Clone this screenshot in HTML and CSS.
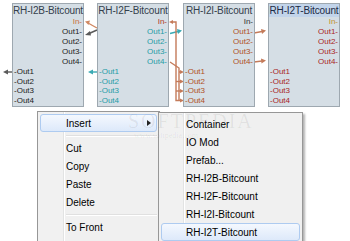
FILE: index.html
```html
<!DOCTYPE html>
<html lang="en">
<head>
    <meta charset="UTF-8">
    <title>Bitcount modules</title>
    <link rel="stylesheet" href="styles.css">
</head>
<body>
    <div class="canvas">
        <svg class="wires" width="350" height="110" viewBox="0 0 350 110">
            <!-- I2B -->
            <g class="wire-gray">
                <line x1="12" y1="72" x2="6" y2="72"/>
                <polygon points="3,72 8,69.5 8,74.5"/>
                <line x1="88" y1="34" x2="97" y2="30"/>
                <polygon points="85,35 90,31 91,35.5"/>
            </g>
            <g class="wire-orange">
                <line x1="88" y1="23" x2="97" y2="28"/>
                <polygon points="85,21.5 90,20.5 88.5,25"/>
            </g>
            <!-- I2F -->
            <g class="wire-teal">
                <line x1="97" y1="72" x2="92" y2="72"/>
                <polygon points="88,72 93,69.5 93,74.5"/>
                <line x1="170" y1="33.5" x2="178" y2="31.5"/>
                <polygon points="182,30.5 177,29 178,34"/>
            </g>
            <g class="wire-brown">
                <polyline points="172,22 176,22 176,100.5 181,100.5"/>
                <polygon points="169,22 173,20 173,24"/>
                <line x1="176" y1="81.5" x2="181" y2="81.5"/>
                <line x1="176" y1="91" x2="181" y2="91"/>
                <polygon points="184,81.5 180,79.5 180,83.5"/>
                <polygon points="184,91 180,89 180,93"/>
                <polygon points="184,100.5 180,98.5 180,102.5"/>
                <polyline points="170,62 179,68 179,100"/>
                <line x1="179" y1="72" x2="181" y2="72"/>
                <polygon points="184,72 180,70 180,74"/>
                <!-- I2I outputs -->
                <line x1="254" y1="33" x2="262" y2="31.5"/>
                <polygon points="266,30.5 261,29 262,34"/>
                <line x1="254" y1="62" x2="262" y2="61"/>
                <polygon points="266,60.5 261,58.5 261.5,63.5"/>
            </g>
        </svg>

        <div class="node node-b">
            <div class="node-title">RH-I2B-Bitcount</div>
            <div class="ports-out">
                <div class="port-in">In-</div>
                <div>Out1-</div>
                <div>Out2-</div>
                <div>Out3-</div>
                <div>Out4-</div>
            </div>
            <div class="ports-left">
                <div>-Out1</div>
                <div>-Out2</div>
                <div>-Out3</div>
                <div>-Out4</div>
            </div>
        </div>

        <div class="node node-f">
            <div class="node-title">RH-I2F-Bitcount</div>
            <div class="ports-out">
                <div class="port-in">In-</div>
                <div>Out1-</div>
                <div>Out2-</div>
                <div>Out3-</div>
                <div>Out4-</div>
            </div>
            <div class="ports-left">
                <div>-Out1</div>
                <div>-Out2</div>
                <div>-Out3</div>
                <div>-Out4</div>
            </div>
        </div>

        <div class="node node-i">
            <div class="node-title">RH-I2I-Bitcount</div>
            <div class="ports-out">
                <div class="port-in">In-</div>
                <div>Out1-</div>
                <div>Out2-</div>
                <div>Out3-</div>
                <div>Out4-</div>
            </div>
            <div class="ports-left">
                <div>-Out1</div>
                <div>-Out2</div>
                <div>-Out3</div>
                <div>-Out4</div>
            </div>
        </div>

        <div class="node node-t selected">
            <div class="node-title">RH-I2T-Bitcount</div>
            <div class="ports-out">
                <div class="port-in">In-</div>
                <div>Out1-</div>
                <div>Out2-</div>
                <div>Out3-</div>
                <div>Out4-</div>
            </div>
            <div class="ports-left">
                <div>-Out1</div>
                <div>-Out2</div>
                <div>-Out3</div>
                <div>-Out4</div>
            </div>
        </div>
    </div>

    <div class="menu main-menu">
        <div class="menu-item active">Insert<span class="submenu-arrow"></span></div>
        <div class="menu-sep"></div>
        <div class="menu-item">Cut</div>
        <div class="menu-item">Copy</div>
        <div class="menu-item">Paste</div>
        <div class="menu-item">Delete</div>
        <div class="menu-sep"></div>
        <div class="menu-item">To Front</div>
    </div>

    <div class="menu sub-menu">
        <div class="menu-item">Container</div>
        <div class="menu-item">IO Mod</div>
        <div class="menu-item">Prefab...</div>
        <div class="menu-item">RH-I2B-Bitcount</div>
        <div class="menu-item">RH-I2F-Bitcount</div>
        <div class="menu-item">RH-I2I-Bitcount</div>
        <div class="menu-item active">RH-I2T-Bitcount</div>
    </div>

    <div class="watermark">
        <div class="watermark-name">SOFTPEDIA</div>
        <div class="watermark-url">www.softpedia.com</div>
    </div>
</body>
</html>
```

FILE: styles.css
```css
body {
    margin: 0;
    width: 350px;
    height: 241px;
    overflow: hidden;
    position: relative;
    background: #fff;
    font-family: "Liberation Sans", Arial, sans-serif;
}
.canvas {
    position: relative;
    height: 110px;
}
.wires {
    position: absolute;
    left: 0;
    top: 0;
}
.wires line,
.wires polyline {
    fill: none;
    stroke-width: 1.4;
}
.wire-gray line { stroke: #5a5a5a; }
.wire-gray polygon { fill: #5a5a5a; }
.wire-orange line { stroke: #d08862; }
.wire-orange polygon { fill: #d08862; }
.wire-teal line { stroke: #3aaab4; }
.wire-teal polygon { fill: #3aaab4; }
.wire-brown line,
.wire-brown polyline { stroke: #c47b5a; }
.wire-brown polygon { fill: #c47b5a; }

/* module nodes */
.node {
    position: absolute;
    top: 3px;
    width: 70px;
    padding-bottom: 1px;
    background: #d5dee5;
    border: 1px solid #9ea8b0;
}
.node-b { left: 12px; }
.node-f { left: 97px; }
.node-i { left: 183px; }
.node-t { left: 268px; }
.node-title {
    height: 13px;
    line-height: 13px;
    font-size: 10px;
    letter-spacing: -0.15px;
    text-align: center;
    white-space: nowrap;
    color: #34404c;
}
.selected .node-title {
    background: #c2d4ea;
    color: #1c2a44;
}
.ports-out {
    text-align: right;
    font-size: 8px;
    line-height: 10px;
    padding-right: 1px;
}
.ports-left {
    font-size: 8px;
    line-height: 9.5px;
    padding-left: 1px;
}
.node-b .ports-out,
.node-b .ports-left { color: #222; }
.node-b .port-in { color: #c8703c; }
.node-f .ports-out,
.node-f .ports-left { color: #1f9ca6; }
.node-f .port-in { color: #b23c1e; }
.node-i .ports-out,
.node-i .ports-left { color: #b0501e; }
.node-i .port-in { color: #333; }
.node-t .ports-out,
.node-t .ports-left { color: #a81e1e; }
.node-t .port-in { color: #c0902e; }

/* context menus, cut off by the bottom of the window */
.menu {
    position: absolute;
    padding: 2px 2px 0;
    border: 1px solid #979797;
    border-bottom: none;
    font-size: 10px;
    color: #000;
    box-shadow: 2px 2px 2px rgba(0, 0, 0, 0.3);
}
.main-menu {
    left: 37px;
    top: 111px;
    width: 117px;
    height: 128px;
    background: linear-gradient(to right, #f1f1f1 0, #f1f1f1 25px, #e2e3e3 25px, #e2e3e3 26px, #fff 26px, #fff 27px, #f0f0f0 27px);
}
.sub-menu {
    left: 158px;
    top: 112px;
    width: 139px;
    height: 127px;
    background: linear-gradient(to right, #f1f1f1 0, #f1f1f1 24px, #e2e3e3 24px, #e2e3e3 25px, #fff 25px, #fff 26px, #f0f0f0 26px);
}
.menu-item {
    display: flex;
    align-items: center;
    height: 18px;
    padding-left: 26px;
    box-sizing: border-box;
}
.sub-menu .menu-item {
    padding-left: 25px;
}
.menu-item.active {
    border: 1px solid #aecbf0;
    border-radius: 3px;
    padding-left: 25px;
    background: linear-gradient(#f4f8fe, #dde9fa);
}
.sub-menu .menu-item.active {
    padding-left: 24px;
}
.submenu-arrow {
    margin-left: auto;
    margin-right: 5px;
    width: 0;
    height: 0;
    border-left: 4px solid #222;
    border-top: 3.5px solid transparent;
    border-bottom: 3.5px solid transparent;
}
.menu-sep {
    height: 1px;
    margin: 3px 0 2px 26px;
    background: #e0e0e0;
    border-bottom: 1px solid #fff;
}

/* faint site watermark over the screenshot */
.watermark {
    position: absolute;
    left: 128px;
    top: 110px;
    pointer-events: none;
    color: rgba(0, 0, 0, 0.07);
    font-family: "Liberation Serif", serif;
}
.watermark-name {
    font-size: 20px;
    letter-spacing: 2px;
}
.watermark-url {
    margin: -2px 0 0 6px;
    font-size: 8px;
}
```
